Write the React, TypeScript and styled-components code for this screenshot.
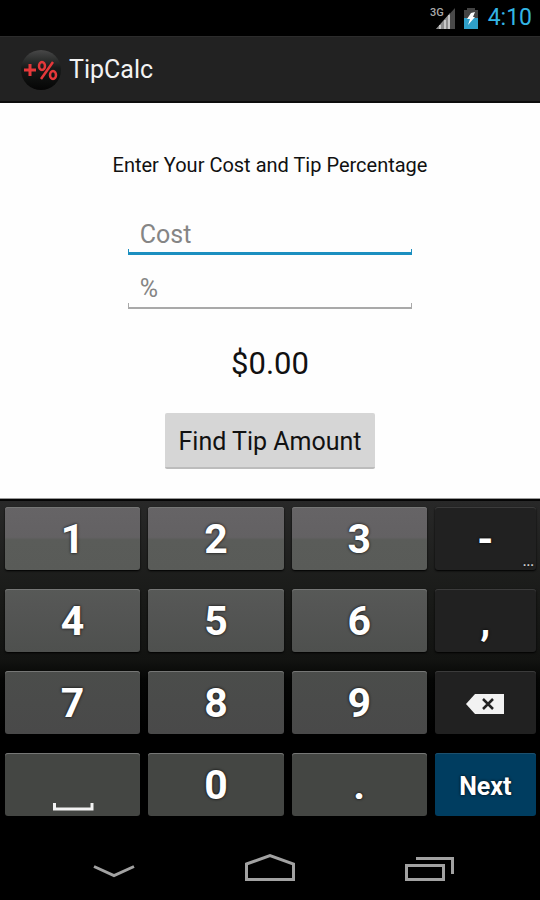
import React, { useState } from "react";
import styled, { createGlobalStyle } from "styled-components";

const GlobalStyle = createGlobalStyle`
  * { box-sizing: border-box; }
  body { margin: 0; background: #000; }
  button, input { font: inherit; }
`;

const Screen = styled.div`
  display: flex;
  flex-direction: column;
  min-height: 100vh;
  background: #000;
  font-family: Roboto, "Noto Sans", sans-serif;
`;

const StatusBar = styled.header`
  display: flex;
  justify-content: flex-end;
  align-items: center;
  height: 36px;
  padding: 0 8px;
  color: #33b5e5;
`;

const SignalIcon = styled.svg`
  width: 28px;
  height: 24px;
  margin-right: 6px;
`;

const BatteryIcon = styled.svg`
  width: 16px;
  height: 24px;
  margin-right: 9px;
`;

const Clock = styled.time`
  font-size: 23px;
  line-height: 36px;
`;

const ActionBar = styled.div`
  display: flex;
  align-items: center;
  gap: 8px;
  height: 67px;
  padding: 2px 20px 0;
  background: #222;
  border-top: 1px solid #2c2c2c;
  border-bottom: 2px solid #0c0c0c;
`;

const AppLogo = styled.svg`
  width: 41px;
  height: 44px;
`;

const Title = styled.h1`
  margin: 0;
  color: #f3f3f3;
  font-size: 25px;
  font-weight: 400;
  line-height: 32px;
`;

const Form = styled.form`
  display: flex;
  flex: 1;
  flex-direction: column;
  align-items: center;
  padding: 50px 16px 29px;
  background: #fefefe;
  border-bottom: 1px solid #999;
`;

const Prompt = styled.p`
  margin: 0 0 36px;
  color: #111;
  font-size: 20px;
  line-height: 24px;
`;

const Field = styled.input<{ $active?: boolean }>`
  --line: ${(p) => (p.$active ? "#1b8fc0" : "#a9a9a9")};
  --weight: ${(p) => (p.$active ? "3px" : "2px")};
  width: 56%;
  height: 42px;
  margin-bottom: 12px;
  padding: 0 12px;
  border: 0;
  border-radius: 0;
  outline: 0;
  color: #111;
  font-size: 25px;
  background:
    linear-gradient(var(--line), var(--line)) left bottom / 100% var(--weight) no-repeat,
    linear-gradient(var(--line), var(--line)) left bottom / 1px 6px no-repeat,
    linear-gradient(var(--line), var(--line)) right bottom / 1px 6px no-repeat;

  &::placeholder {
    color: #858585;
    opacity: 1;
  }
`;

const Result = styled.output`
  margin: 24px 0 30px;
  color: #111;
  font-size: 31px;
  line-height: 38px;
`;

const Submit = styled.button`
  height: 56px;
  padding: 2px 13px 0;
  border: 0;
  border-bottom: 2px solid #bcbcbc;
  border-radius: 2px;
  background: #d6d6d6;
  color: #111;
  font-size: 25px;
`;

const Keyboard = styled.div`
  display: grid;
  grid-template-columns: 135fr 135fr 135fr 101fr;
  grid-auto-rows: 63px;
  gap: 19px 8px;
  padding: 6px 4px 16px 5px;
  border-top: 2px solid #050505;
  background: linear-gradient(#282828, #1a1b19 28%, #121311 48%, #050605 54%, #000 70%);
`;

const toneColors = {
  first: "linear-gradient(#666466, #636163 48%, #5a5c59 52%, #595b58)",
  second: "linear-gradient(#575957, #555655 25%, #4e504e)",
  third: "linear-gradient(#4b4d4b, #494949)",
  last: "#444643",
  dark: "#212121",
  next: "#003d60",
};

type Tone = keyof typeof toneColors;

const topEdge = (tone: Tone) =>
  tone === "dark" ? "#3b3b3b" : tone === "next" ? "#1c506e" : "#767776";

const Key = styled.button<{ $tone: Tone }>`
  position: relative;
  display: flex;
  justify-content: center;
  align-items: center;
  padding: ${(p) => (p.$tone === "next" ? "4px" : "1px")} 0 0;
  border: 0;
  border-radius: 3px;
  background: ${(p) => toneColors[p.$tone]};
  box-shadow: inset 0 1px 0 ${(p) => topEdge(p.$tone)}, 0 1px 2px #000;
  color: #fff;
  font-size: ${(p) => (p.$tone === "next" ? "25px" : "41px")};
  font-weight: 700;
  line-height: 48px;
  text-shadow: 0 0 3px #000;
`;

const MoreHint = styled.span`
  position: absolute;
  right: 2px;
  bottom: 2px;
  color: #ccc;
  font-size: 13px;
  font-weight: 700;
  line-height: 12px;
`;

const KeyIcon = styled.svg`
  width: 44px;
  height: 63px;
`;

const NavBar = styled.nav`
  display: grid;
  grid-template-columns: repeat(3, 158px);
  justify-content: center;
  height: 68px;
`;

const NavButton = styled.button`
  display: grid;
  place-items: center;
  padding: 0;
  border: 0;
  background: none;
`;

const NavIcon = styled.svg`
  width: 64px;
  height: 32px;
  fill: none;
  stroke: #a2a2a2;
  stroke-width: 3;
`;

type KeyDef = { label: string; value?: string; tone: Tone };

const keys: KeyDef[] = [
  { label: "1", tone: "first" },
  { label: "2", tone: "first" },
  { label: "3", tone: "first" },
  { label: "-", tone: "dark" },
  { label: "4", tone: "second" },
  { label: "5", tone: "second" },
  { label: "6", tone: "second" },
  { label: ",", tone: "dark" },
  { label: "7", tone: "third" },
  { label: "8", tone: "third" },
  { label: "9", tone: "third" },
  { label: "Delete", tone: "dark" },
  { label: "Space", value: " ", tone: "last" },
  { label: "0", tone: "last" },
  { label: ".", tone: "last" },
  { label: "Next", tone: "next" },
];

function KeyFace({ label }: { label: string }) {
  if (label === "Delete") {
    return (
      <KeyIcon viewBox="0 0 44 63" aria-hidden="true">
        <path d="M3 32L12 22H41V42H12Z" fill="#f2f2f2" />
        <path d="M20 27L30 37M30 27L20 37" stroke="#222" strokeWidth="2.5" />
      </KeyIcon>
    );
  }
  if (label === "Space") {
    return (
      <KeyIcon viewBox="0 0 44 63" aria-hidden="true">
        <path d="M3.5 49V55H41V49" fill="none" stroke="#f2f2f2" strokeWidth="3" />
      </KeyIcon>
    );
  }
  return <>{label}</>;
}

export default function App() {
  const [values, setValues] = useState({ cost: "", percent: "" });
  const [active, setActive] = useState<"cost" | "percent">("cost");
  const [tip, setTip] = useState(0);

  const press = ({ label, value }: KeyDef) => {
    if (label === "Next") {
      setActive(active === "cost" ? "percent" : "cost");
      return;
    }
    const current = values[active];
    const next = label === "Delete" ? current.slice(0, -1) : current + (value ?? label);
    setValues({ ...values, [active]: next });
  };

  const submit = (event: React.FormEvent) => {
    event.preventDefault();
    setTip(((parseFloat(values.cost) || 0) * (parseFloat(values.percent) || 0)) / 100);
  };

  return (
    <Screen>
      <GlobalStyle />
      <StatusBar>
        <SignalIcon viewBox="0 0 28 24" role="img" aria-label="3G signal">
          <text x="1" y="10" fontSize="11" fontWeight="500" fill="#aaa">3G</text>
          <path d="M7 23L26 2V23Z" fill="#484848" />
          <path d="M7 23L21 7V23Z" fill="#8c8c8c" />
          <path d="M11 19V23M16 14V23M20 9V23" stroke="#c6c6c6" strokeWidth="2" />
        </SignalIcon>
        <BatteryIcon viewBox="0 0 16 24" role="img" aria-label="Battery charging">
          <path d="M4 2H12V4H15V12H1V4H4Z" fill="#444" />
          <path d="M1 12H15V23H1Z" fill="#2f9fc9" />
          <path d="M8 7L12 6L10 11H12L5 19L7 13H4Z" fill="#fff" />
        </BatteryIcon>
        <Clock>4:10</Clock>
      </StatusBar>

      <ActionBar>
        <AppLogo viewBox="0 0 41 44" aria-hidden="true">
          <defs>
            <linearGradient id="ball" x1="0" y1="0" x2="0" y2="1">
              <stop offset="0" stopColor="#484848" />
              <stop offset="0.45" stopColor="#171a19" />
              <stop offset="1" stopColor="#050505" />
            </linearGradient>
          </defs>
          <circle cx="21" cy="22" r="20" fill="url(#ball)" />
          <g fill="none" stroke="#e5383a" strokeWidth="3">
            <path d="M4 22H16M10 16V28" />
            <path d="M33 14L21 31" strokeWidth="2.5" />
            <ellipse cx="22" cy="18" rx="3" ry="4" strokeWidth="2.5" />
            <ellipse cx="33" cy="27" rx="3" ry="4" strokeWidth="2.5" />
          </g>
        </AppLogo>
        <Title>TipCalc</Title>
      </ActionBar>

      <Form onSubmit={submit}>
        <Prompt>Enter Your Cost and Tip Percentage</Prompt>
        <Field
          aria-label="Cost"
          placeholder="Cost"
          $active={active === "cost"}
          value={values.cost}
          onFocus={() => setActive("cost")}
          onChange={(e) => setValues({ ...values, cost: e.target.value })}
        />
        <Field
          aria-label="Tip percentage"
          placeholder="%"
          $active={active === "percent"}
          value={values.percent}
          onFocus={() => setActive("percent")}
          onChange={(e) => setValues({ ...values, percent: e.target.value })}
        />
        <Result>${tip.toFixed(2)}</Result>
        <Submit type="submit">Find Tip Amount</Submit>
      </Form>

      <Keyboard>
        {keys.map((key) => (
          <Key
            key={key.label}
            type="button"
            aria-label={key.label}
            $tone={key.tone}
            onClick={() => press(key)}
          >
            <KeyFace label={key.label} />
            {key.label === "-" && <MoreHint>...</MoreHint>}
          </Key>
        ))}
      </Keyboard>

      <NavBar aria-label="System">
        <NavButton type="button" aria-label="Hide keyboard">
          <NavIcon viewBox="0 0 64 32">
            <path d="M14 16.500L34 25.500L54 16.500" />
          </NavIcon>
        </NavButton>
        <NavButton type="button" aria-label="Home">
          <NavIcon viewBox="0 0 64 32">
            <path d="M8.500 14L32 5.500L55.500 14V29.500H8.500Z" />
          </NavIcon>
        </NavButton>
        <NavButton type="button" aria-label="Recent apps">
          <NavIcon viewBox="0 0 64 32">
            <path d="M10.500 15.500H47.500V29.500H10.500ZM20 8.500H56.500V24" />
          </NavIcon>
        </NavButton>
      </NavBar>
    </Screen>
  );
}
